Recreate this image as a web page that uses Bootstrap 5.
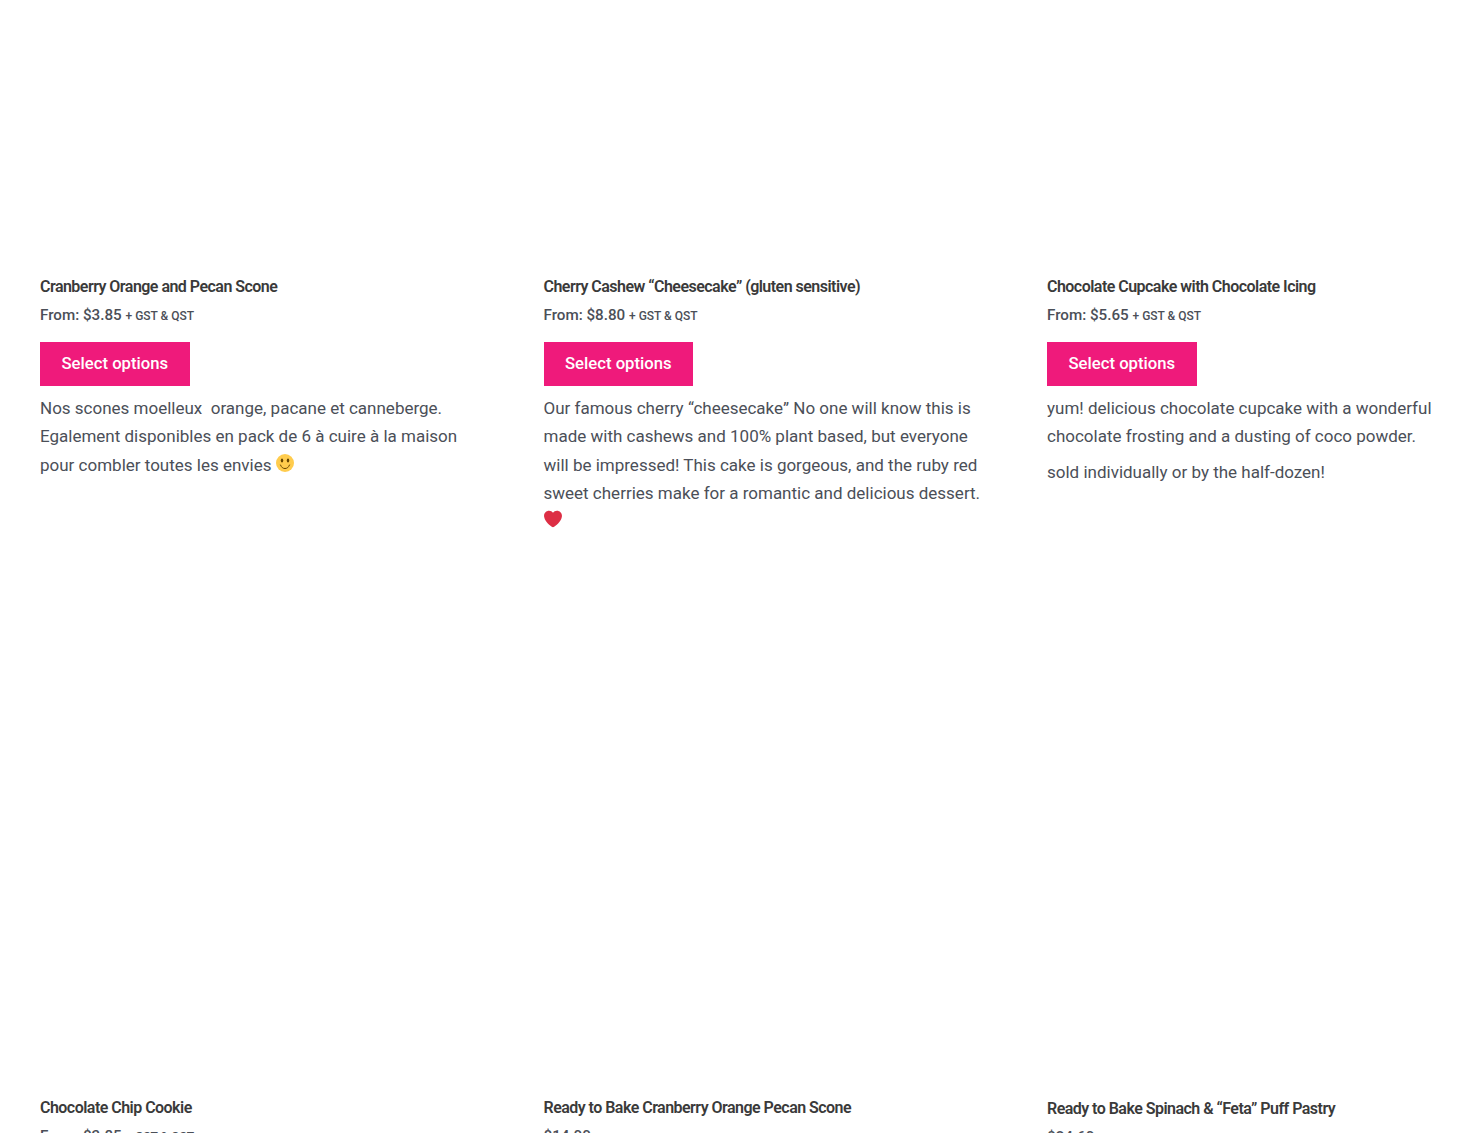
<!DOCTYPE html>
<html lang="en">
<head>
  <meta charset="UTF-8">
  <meta name="viewport" content="width=device-width, initial-scale=1">
  <title>Shop</title>
  <link href="https://cdn.jsdelivr.net/npm/bootstrap@5.3.2/dist/css/bootstrap.min.css" rel="stylesheet">
  <style>
    html, body {
      height: 100%;
      overflow: hidden;
      background-color: #fff;
    }
    body {
      font-family: Roboto, "Liberation Sans", sans-serif;
      font-size: 17px;
      line-height: 28.35px;
      color: #4b4f58;
    }
    .shop-grid {
      display: grid;
      grid-template-columns: 443.5px 443.5px 1fr;
      column-gap: 60px;
      padding-left: 40px;
    }
    .thumb-one { height: 273px; }
    .thumb-two { height: 544px; }
    .thumb-three { height: 545px; }
    .item-title {
      font-family: Roboto, sans-serif;
      font-weight: 600;
      font-size: 16px;
      line-height: 27.5px;
      letter-spacing: -.53px;
      color: #3a3a3a;
      margin: 0;
    }
    .item-price {
      font-size: 15.2px;
      font-weight: 500;
      line-height: 28px;
      margin: 0 0 12.5px;
    }
    .item-tax { font-size: 12px; }
    .btn-options {
      background-color: #ef1a7b;
      color: #fff;
      font-size: 16.7px;
      font-weight: 500;
      line-height: 24px;
      padding: 10px 21.5px;
      border: 0;
      border-radius: 0;
      margin-bottom: 8px;
    }
    .btn-options:hover { background-color: #ef1a7b; color: #fff; }
    .item-text { margin: 0 0 7.5px; }
    .emoji-icon { width: 18px; height: 18px; vertical-align: -1px; }
    .item-cell { min-height: 550px; }
  </style>
</head>
<body>

<div class="shop-grid">
  <div class="item-cell">
    <div class="thumb-one"></div>
    <h2 class="item-title">Cranberry Orange and Pecan Scone</h2>
    <p class="item-price">From: $3.85 <span class="item-tax">+ GST &amp; QST</span></p>
    <a href="#" class="btn btn-options">Select options</a>
    <p class="item-text">Nos scones moelleux&nbsp; orange, pacane et canneberge. Egalement disponibles en pack de 6 à cuire à la maison pour combler toutes les envies
      <svg class="emoji-icon" viewBox="0 0 36 36"><circle cx="18" cy="18" r="18" fill="#ffcc4d"/><ellipse cx="12" cy="13" rx="2.5" ry="4" fill="#664500"/><ellipse cx="24" cy="13" rx="2.5" ry="4" fill="#664500"/><path d="M9 22c2 5 5 7 9 7s7-2 9-7" fill="none" stroke="#664500" stroke-width="2" stroke-linecap="round"/></svg>
    </p>
  </div>
  <div class="item-cell">
    <div class="thumb-one"></div>
    <h2 class="item-title">Cherry Cashew “Cheesecake” (gluten sensitive)</h2>
    <p class="item-price">From: $8.80 <span class="item-tax">+ GST &amp; QST</span></p>
    <a href="#" class="btn btn-options">Select options</a>
    <p class="item-text">Our famous cherry “cheesecake” No one will know this is made with cashews and 100% plant based, but everyone will be impressed! This cake is gorgeous, and the ruby red sweet cherries make for a romantic and delicious dessert.
      <svg class="emoji-icon" viewBox="0 0 36 36"><path d="M35.9 11.5c0-5.500-4.500-10-10-10-3.300 0-6.300 1.600-7.900 4.100C16.400 3.100 13.400 1.500 10.100 1.500c-5.500 0-10 4.500-10 10 0 1 .1 1.900.4 2.800C2.300 23.800 12.100 31.400 18 34.500c5.900-3.100 15.700-10.700 17.500-20.200.3-.9.400-1.800.4-2.800z" fill="#dd2e44"/></svg>
    </p>
  </div>
  <div class="item-cell">
    <div class="thumb-one"></div>
    <h2 class="item-title">Chocolate Cupcake with Chocolate Icing</h2>
    <p class="item-price">From: $5.65 <span class="item-tax">+ GST &amp; QST</span></p>
    <a href="#" class="btn btn-options">Select options</a>
    <p class="item-text">yum! delicious chocolate cupcake with a wonderful chocolate frosting and a dusting of coco powder.</p>
    <p class="item-text">sold individually or by the half-dozen!</p>
  </div>

  <div>
    <div class="thumb-two"></div>
    <h2 class="item-title">Chocolate Chip Cookie</h2>
    <p class="item-price">From: $3.85 <span class="item-tax">+ GST &amp; QST</span></p>
  </div>
  <div>
    <div class="thumb-two"></div>
    <h2 class="item-title">Ready to Bake Cranberry Orange Pecan Scone</h2>
    <p class="item-price">$14.00</p>
  </div>
  <div>
    <div class="thumb-three"></div>
    <h2 class="item-title">Ready to Bake Spinach &amp; “Feta” Puff Pastry</h2>
    <p class="item-price">$24.60</p>
  </div>
</div>

<script src="https://cdn.jsdelivr.net/npm/bootstrap@5.3.2/dist/js/bootstrap.bundle.min.js"></script>
</body>
</html>
